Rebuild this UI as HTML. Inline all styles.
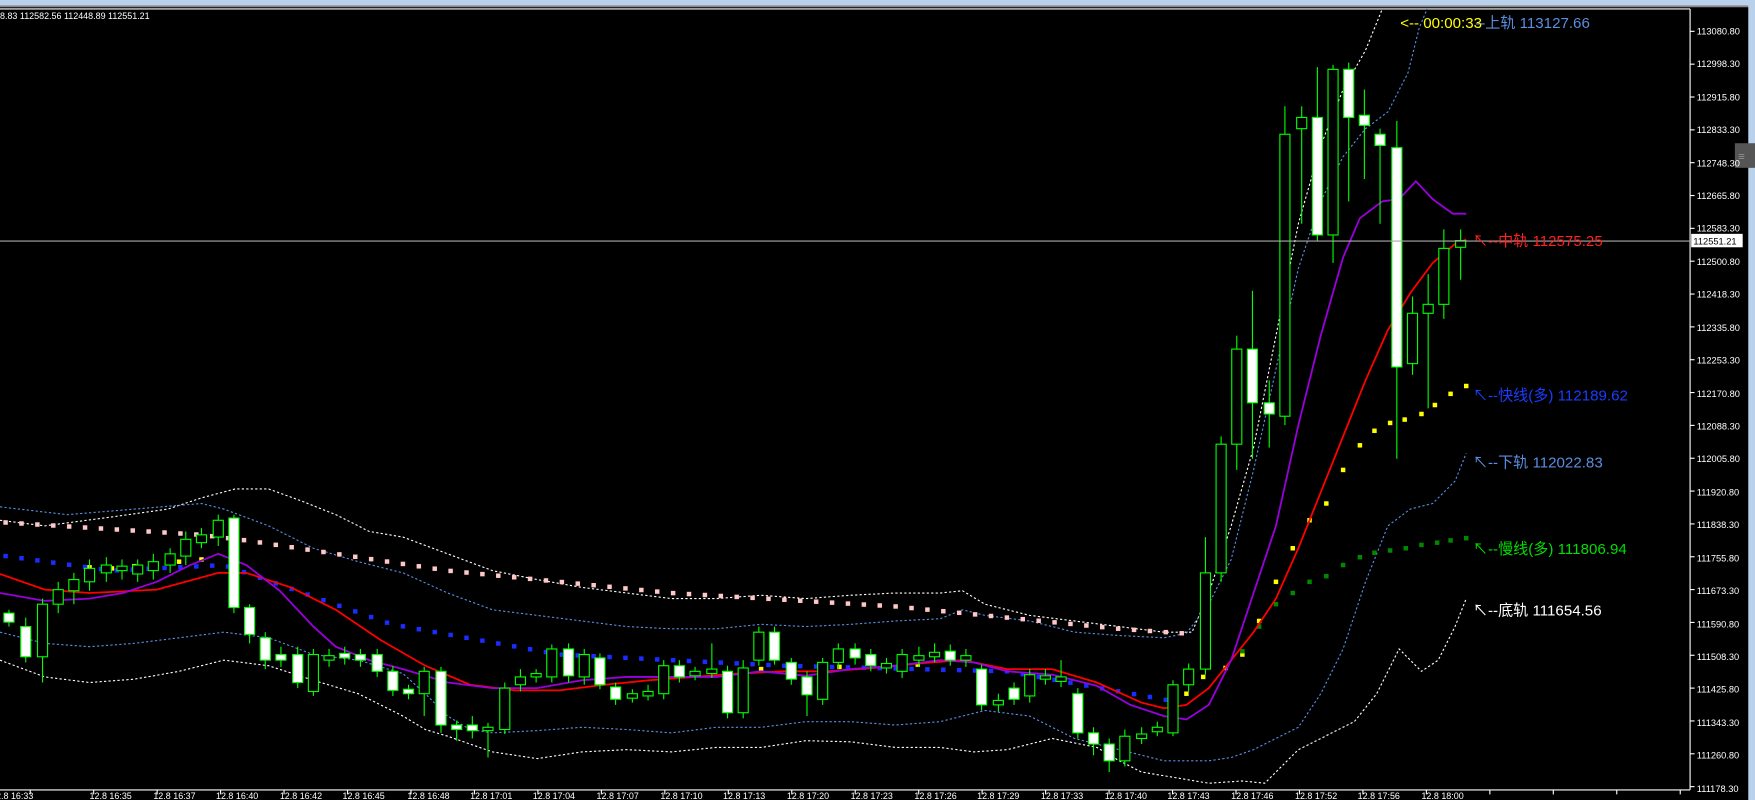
<!DOCTYPE html>
<html><head><meta charset="utf-8"><style>
html,body{margin:0;padding:0;background:#000;overflow:hidden}
svg{display:block}
text{font-family:"Liberation Sans","Noto Sans CJK SC",sans-serif}
</style></head><body>
<svg id="s" width="1755" height="800" viewBox="0 0 1568 715" preserveAspectRatio="none" xmlns="http://www.w3.org/2000/svg">
<rect x="0" y="0" width="1568" height="715" fill="#000"/>
<rect x="0" y="0" width="1568" height="5" fill="#b9d1ea"/>
<rect x="0" y="5" width="1568" height="1.5" fill="#888"/>
<line x1="0" y1="8" x2="1510" y2="8" stroke="#fff" stroke-width="1"/>
<line x1="1510" y1="8" x2="1510" y2="706" stroke="#fff" stroke-width="1"/>
<line x1="0" y1="706" x2="1510" y2="706" stroke="#fff" stroke-width="1"/>
<rect x="1562" y="0" width="6" height="715" fill="#b9d1ea"/>
<rect x="1550" y="128" width="18" height="22" fill="#555"/>
<text x="1553" y="143" font-size="10" fill="#999">≡</text>
<g id="lines"></g>
<g id="candles"></g>
<line x1="0" y1="215.5" x2="1510" y2="215.5" stroke="#aaa" stroke-width="1"/>
<g id="ticks"></g>
<text x="0" y="17" font-size="8" fill="#fff">8.83 112582.56 112448.89 112551.21</text>
<g font-size="8.3" fill="#fff">
<text x="1516" y="31">113080.80</text>
<text x="1516" y="60">112998.30</text>
<text x="1516" y="90">112915.80</text>
<text x="1516" y="119">112833.30</text>
<text x="1516" y="149">112748.30</text>
<text x="1516" y="178">112665.80</text>
<text x="1516" y="207">112583.30</text>
<text x="1516" y="237">112500.80</text>
<text x="1516" y="266">112418.30</text>
<text x="1516" y="296">112335.80</text>
<text x="1516" y="325">112253.30</text>
<text x="1516" y="355">112170.80</text>
<text x="1516" y="384">112088.30</text>
<text x="1516" y="413">112005.80</text>
<text x="1516" y="443">111920.80</text>
<text x="1516" y="472">111838.30</text>
<text x="1516" y="502">111755.80</text>
<text x="1516" y="531">111673.30</text>
<text x="1516" y="561">111590.80</text>
<text x="1516" y="590">111508.30</text>
<text x="1516" y="619">111425.80</text>
<text x="1516" y="649">111343.30</text>
<text x="1516" y="678">111260.80</text>
<text x="1516" y="708">111178.30</text>
</g>
<rect x="1511" y="209" width="46" height="12" fill="#fff"/>
<text x="1513" y="218.5" font-size="8.3" fill="#000">112551.21</text>
<g font-size="8" fill="#fff">
<text x="-8" y="714">12.8 16:33</text><text x="80" y="714">12.8 16:35</text><text x="137" y="714">12.8 16:37</text><text x="193" y="714">12.8 16:40</text><text x="250" y="714">12.8 16:42</text><text x="306" y="714">12.8 16:45</text><text x="364" y="714">12.8 16:48</text><text x="420" y="714">12.8 17:01</text><text x="476" y="714">12.8 17:04</text><text x="533" y="714">12.8 17:07</text><text x="590" y="714">12.8 17:10</text><text x="646" y="714">12.8 17:13</text><text x="703" y="714">12.8 17:20</text><text x="760" y="714">12.8 17:23</text><text x="817" y="714">12.8 17:26</text><text x="873" y="714">12.8 17:29</text><text x="930" y="714">12.8 17:33</text><text x="987" y="714">12.8 17:40</text><text x="1043" y="714">12.8 17:43</text><text x="1100" y="714">12.8 17:46</text><text x="1157" y="714">12.8 17:52</text><text x="1213" y="714">12.8 17:56</text><text x="1270" y="714">12.8 18:00</text>
</g>
<g font-size="13.5">
<text x="1251" y="25" fill="#ffff00">&lt;-- 00:00:33</text>
<text x="1318" y="25" fill="#5b8de0">--上轨  113127.66</text>
<text x="1316" y="220" fill="#ff2020">↖--中轨  112575.25</text>
<text x="1316" y="358" fill="#1a3cff">↖--快线(多)  112189.62</text>
<text x="1316" y="418" fill="#5b8de0">↖--下轨  112022.83</text>
<text x="1316" y="495" fill="#00dd00">↖--慢线(多)  111806.94</text>
<text x="1316" y="550" fill="#ffffff">↖--底轨  111654.56</text>
</g>
</svg>
<script>
var NS="http://www.w3.org/2000/svg";
function el(p,t,a){var e=document.createElementNS(NS,t);for(var k in a)e.setAttribute(k,a[k]);p.appendChild(e);return e;}
var L=document.getElementById('lines'),C=document.getElementById('candles'),T=document.getElementById('ticks');
function pl(pts,stroke,w,dash){el(L,'polyline',{points:pts.map(function(p){return p.join(',')}).join(' '),fill:'none',stroke:stroke,'stroke-width':w,'stroke-dasharray':dash||'none'});}
function interp(pts,x){for(var i=0;i<pts.length-1;i++){if(x>=pts[i][0]&&x<=pts[i+1][0]){var t=(x-pts[i][0])/(pts[i+1][0]-pts[i][0]);return pts[i][1]+t*(pts[i+1][1]-pts[i][1]);}}return null;}
pl([[0,465],[40,470],[100,462],[150,455],[180,445],[210,437],[240,437],[270,448],[300,460],[330,475],[360,480],[400,495],[440,510],[480,518],[520,525],[560,530],[600,535],[640,535],[680,532],[720,535],[760,532],[800,530],[840,530],[860,528],[880,540],[920,550],[960,555],[1000,560],[1040,565],[1065,565],[1080,530],[1100,470],[1120,400],[1140,300],[1160,200],[1180,130],[1200,80],[1220,45],[1235,8]],'#fff',1,'2,2');
pl([[0,453],[60,460],[120,455],[180,450],[200,455],[240,470],[280,490],[320,502],[360,512],[400,530],[440,545],[480,550],[520,555],[560,560],[600,562],[640,562],[680,558],[720,560],[760,558],[800,555],[840,553],[860,545],[880,550],[920,555],[960,565],[1000,568],[1040,570],[1060,566],[1080,540],[1100,500],[1120,420],[1140,330],[1160,240],[1180,180],[1200,140],[1220,115],[1240,100],[1258,65],[1268,25],[1275,8]],'#5b8de0',1,'2,2');
pl([[0,565],[40,575],[80,578],[120,575],[160,570],[200,565],[240,570],[280,585],[320,590],[360,602],[380,620],[400,640],[420,652],[440,655],[480,653],[520,650],[560,652],[600,655],[640,650],[680,650],[720,645],[760,645],[800,648],[840,645],[860,640],[880,635],[920,640],[960,660],[1000,670],[1040,680],[1080,680],[1100,677],[1120,670],[1140,660],[1160,650],[1180,620],[1200,580],[1220,520],[1240,470],[1260,455],[1280,450],[1300,430],[1310,405]],'#5b8de0',1,'2,2');
pl([[0,590],[40,605],[80,610],[120,607],[160,600],[200,590],[240,595],[280,608],[320,620],[360,640],[380,652],[400,658],[420,665],[440,672],[460,675],[480,678],[520,672],[560,670],[600,672],[640,668],[680,668],[720,662],[760,663],[800,668],[840,668],[870,672],[900,670],[940,660],[980,668],[1000,680],[1020,690],[1050,695],[1080,700],[1110,698],[1130,700],[1140,690],[1160,670],[1180,660],[1210,645],[1230,620],[1250,580],[1270,600],[1285,590],[1300,560],[1310,535]],'#fff',1,'2,2');
// dots
var pink=[[5,467],[180,478],[220,483],[400,510],[600,530],[800,542],[860,548],[1000,562],[1070,567]];
for(var x=5;x<=1070;x+=14.2){el(L,'rect',{x:x-2,y:interp(pink,x)-2,width:4,height:4,fill:'#ffc8c8'});}
var blue=[[5,497],[100,510],[200,505],[350,558],[500,585],[700,595],[900,600],[1050,627]];
for(var x=5;x<=1050;x+=14.2){el(L,'rect',{x:x-2,y:interp(blue,x)-2,width:4,height:4,fill:'#1a2cff'});}
var ylw=[[80,507],[100,508],[120,506],[140,504],[160,502],[180,500]];
ylw.forEach(function(p){el(L,'rect',{x:p[0]-2,y:p[1]-2,width:4,height:4,fill:'#ffff00'});});
var ylw2=[[610,597],[680,598],[750,596],[820,594],[1060,620],[1075,605],[1095,597],[1110,585],[1125,555],[1140,520],[1155,490],[1170,465],[1185,450],[1200,420],[1215,398],[1228,385],[1242,378],[1255,375],[1270,370],[1282,362],[1296,352],[1310,345]];
ylw2.forEach(function(p){el(L,'rect',{x:p[0]-2,y:p[1]-2,width:4,height:4,fill:'#ffff00'});});
var grn=[[1110,582],[1125,560],[1140,540],[1155,530],[1170,520],[1185,515],[1200,505],[1215,498],[1228,494],[1242,492],[1256,490],[1270,487],[1284,485],[1296,483],[1310,481]];
grn.forEach(function(p){el(L,'rect',{x:p[0]-2,y:p[1]-2,width:4,height:4,fill:'#008800'});});
pl([[0,513],[40,527],[80,530],[140,527],[195,512],[220,512],[260,525],[300,545],[340,572],[380,595],[420,612],[460,617],[500,617],[540,612],[580,608],[620,605],[660,602],[700,600],[740,600],[780,597],[820,593],[860,590],[900,598],[940,598],[980,610],[1020,628],[1040,633],[1060,630],[1080,615],[1100,590],[1120,565],[1140,535],[1160,490],[1180,440],[1200,390],[1220,340],[1240,295],[1260,262],[1280,235],[1300,218],[1310,214]],'#ff0000',1.6);
pl([[0,530],[40,537],[80,535],[110,530],[140,520],[170,505],[195,495],[220,505],[250,528],[280,560],[300,578],[330,590],[360,598],[400,610],[440,615],[480,615],[520,608],[560,605],[600,605],[640,605],[680,600],[720,604],[760,598],[800,595],[840,590],[870,592],[900,600],[940,603],[980,613],[1010,630],[1040,640],[1060,643],[1080,630],[1100,590],[1120,530],[1140,470],[1160,380],[1180,300],[1200,230],[1215,195],[1235,180],[1250,178],[1265,162],[1280,178],[1298,191],[1310,191]],'#9900dd',1.6);
// candles [x, top, bottom, hi, lo, bear]
var cd=[[8,548,556,545,560,1],[23,560,587,552,592,1],[38,540,587,535,610,0],[52,527,540,520,548,0],[66,518,528,512,540,0],[80,508,520,500,528,0],[95,505,512,498,520,0],[109,506,510,500,518,0],[123,505,513,500,520,0],[137,502,510,495,518,0],[152,495,505,490,512,0],[166,482,497,475,505,0],[180,478,485,472,490,0],[195,465,480,460,488,0],[209,463,543,460,548,1],[223,543,567,540,575,1],[237,570,590,565,598,1],[251,585,590,578,596,1],[266,585,610,578,615,1],[280,585,618,580,622,0],[294,586,590,580,596,0],[308,584,588,578,594,1],[322,585,590,580,596,1],[337,585,600,580,605,1],[351,600,617,595,622,1],[365,616,620,612,625,1],[379,600,620,596,640,0],[394,600,648,596,655,1],[408,648,652,644,662,1],[422,648,653,640,660,1],[436,650,653,646,677,0],[451,615,652,610,656,0],[465,605,612,598,618,0],[479,602,605,598,610,0],[493,580,605,576,610,0],[508,580,604,575,610,1],[522,585,605,580,612,0],[536,588,612,584,616,1],[550,614,625,610,630,1],[565,620,624,616,628,0],[579,618,622,612,626,0],[593,595,620,590,625,0],[607,595,605,590,610,1],[621,600,604,596,608,0],[636,598,602,575,606,0],[650,600,637,595,642,1],[664,597,637,590,642,0],[678,565,590,560,595,0],[692,565,590,560,594,1],[707,592,607,588,612,1],[721,605,621,600,640,1],[735,592,625,588,630,0],[749,580,592,575,598,0],[764,580,588,575,594,1],[778,585,595,580,600,1],[792,593,597,588,602,0],[806,585,600,580,606,0],[821,586,590,578,596,0],[835,583,587,575,592,0],[849,582,590,576,595,1],[863,586,590,580,596,0],[877,598,630,594,635,1],[892,626,630,620,636,0],[906,615,625,610,630,1],[920,603,622,598,628,0],[934,604,607,598,612,0],[948,605,609,590,614,0],[963,620,655,615,660,1],[977,655,665,650,675,1],[991,665,680,660,690,1],[1005,658,680,652,685,0],[1020,656,660,650,665,0],[1034,650,654,645,658,0],[1048,612,655,608,658,0],[1062,598,612,593,618,0],[1077,512,598,480,603,0],[1091,397,512,390,520,0],[1105,312,397,300,420,0],[1119,312,360,260,410,1],[1134,360,370,340,400,1],[1148,120,372,95,380,0],[1163,105,115,95,200,0],[1177,105,210,60,215,1],[1191,62,210,58,235,0],[1205,62,105,56,180,1],[1219,103,112,80,160,1],[1233,120,130,115,200,1],[1248,132,328,108,410,1],[1262,280,325,265,335,0],[1276,272,280,245,365,0],[1290,222,272,205,285,0],[1305,215,221,205,250,0]];
cd.forEach(function(c){var x=c[0];
el(C,'line',{x1:x,y1:c[3],x2:x,y2:c[4],stroke:'#00ff00','stroke-width':1});
var h=Math.max(c[2]-c[1],1.5);
el(C,'rect',{x:x-4.5,y:c[1],width:9,height:h,fill:c[5]?'#fff':'#000',stroke:'#00ff00','stroke-width':1});});
for(var i=0;i<24;i++){var y=28+i*29.35;el(T,'line',{x1:1510,y1:y,x2:1514,y2:y,stroke:'#fff','stroke-width':1});}
for(var x=27;x<1510;x+=56.7){el(T,'line',{x1:x,y1:706,x2:x,y2:710,stroke:'#fff','stroke-width':1});}
</script>
</body></html>
